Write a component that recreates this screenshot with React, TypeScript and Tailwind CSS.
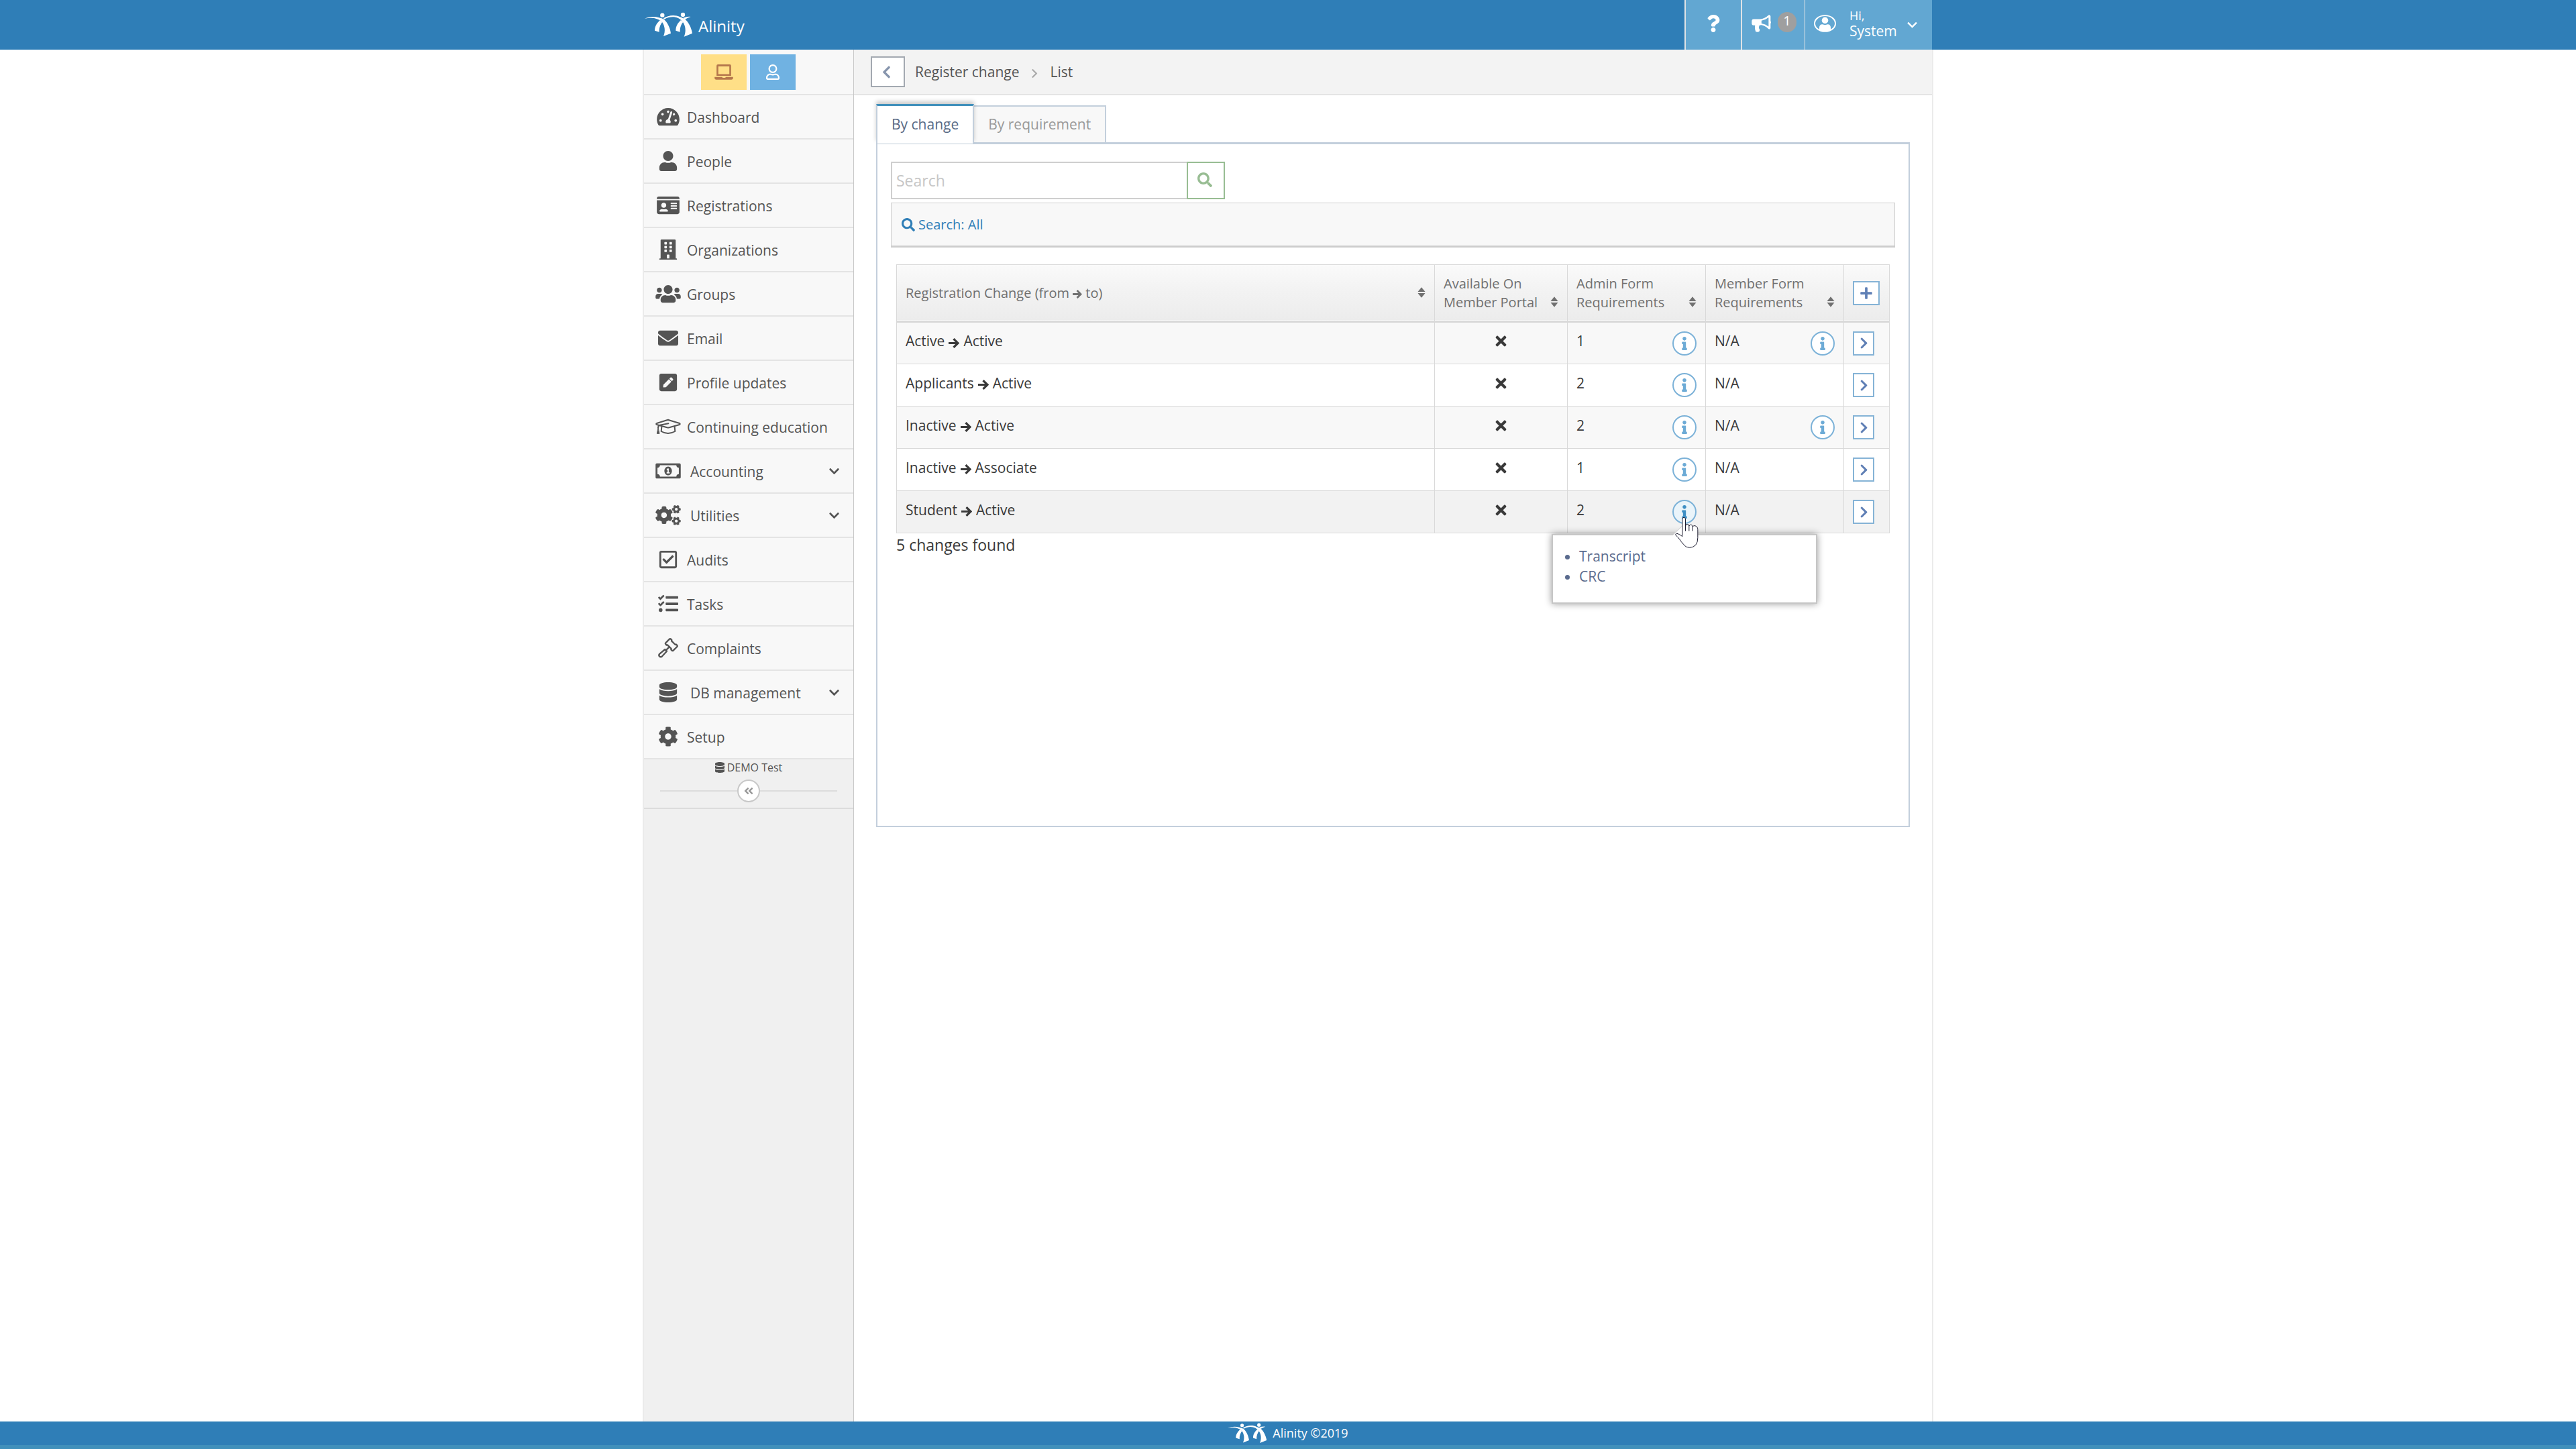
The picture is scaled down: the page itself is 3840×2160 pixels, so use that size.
import React from "react";
import {
  FaAngleDoubleLeft,
  FaBuilding,
  FaChevronDown,
  FaChevronLeft,
  FaChevronRight,
  FaCog,
  FaCogs,
  FaDatabase,
  FaEnvelope,
  FaIdCard,
  FaInfo,
  FaPenSquare,
  FaPlus,
  FaQuestion,
  FaRegCheckSquare,
  FaRegMoneyBillAlt,
  FaRegUser,
  FaSearch,
  FaTachometerAlt,
  FaTasks,
  FaTimes,
  FaUser,
  FaUsers,
} from "react-icons/fa";

type IconProps = { className?: string };

function Logo({ className }: IconProps) {
  return (
    <svg viewBox="0 0 216 110" className={className} fill="currentColor" aria-hidden="true">
      <circle cx="79" cy="12" r="9.5" />
      <circle cx="171" cy="10" r="9.5" />
      <path d="M0 27C22 17 46 17 64 23Q76 26 86 30C102 44 114 68 117 93L84 106C93 86 92 60 76 40C58 26 36 20 0 27Z" />
      <path d="M69 34C56 46 45 60 45 81L65 87C64 68 70 54 79 42Z" />
      <path d="M84 26C104 12 136 8 158 20Q170 24 179 28C195 42 209 66 213 93L176 108C185 88 185 60 169 40C152 20 122 12 88 30Z" />
      <path d="M162 34C149 46 139 60 139 81L158 87C157 68 163 54 172 42Z" />
      <path d="M172 24Q190 17 206 19Q192 24 180 31Z" />
    </svg>
  );
}

function CapIcon({ className }: IconProps) {
  return (
    <svg viewBox="0 0 114 90" className={className} fill="none" stroke="currentColor" strokeWidth="6" strokeLinejoin="round" strokeLinecap="round" aria-hidden="true">
      <path d="M58 15L108 30Q112 33 108 36L62 49Q57 50 52 49L6 36Q1 33 6 30L54 15Q57 14 60 15Z" />
      <path d="M28 46L26 66Q56 84 88 66L86 46" />
      <path d="M58 31L20 38Q12 41 12 50" />
      <path d="M12 52L7 76H17Z" fill="currentColor" strokeWidth="3" />
    </svg>
  );
}

function GavelIcon({ className }: IconProps) {
  return (
    <svg viewBox="0 0 90 90" className={className} fill="none" stroke="currentColor" strokeWidth="7" strokeLinejoin="round" strokeLinecap="round" aria-hidden="true">
      <path d="M51 5Q54 2 57 5L61 9L60 13L77 30L81 29L85 33Q88 36 85 39L68 56Q65 59 62 56L58 52L59 48L42 31L38 32L34 28Q31 25 34 22Z" />
      <path d="M50 40L35 55" />
      <path d="M31 51L39 59L18 82Q12 88 6 82Q1 77 7 71Z" />
    </svg>
  );
}

function LaptopIcon({ className }: IconProps) {
  return (
    <svg viewBox="0 0 84 70" className={className} fill="currentColor" aria-hidden="true">
      <path fillRule="evenodd" d="M15 0H69Q75 0 75 6V52H9V6Q9 0 15 0ZM17 9V44H67V9Z" />
      <path d="M0 57H34Q35 61 39 61H46Q50 61 51 57H84V61Q84 69 76 69H8Q0 69 0 61Z" />
    </svg>
  );
}

function BullhornIcon({ className }: IconProps) {
  return (
    <svg viewBox="0 0 88 78" className={className} fill="currentColor" aria-hidden="true">
      <path fillRule="evenodd" d="M10 19H38Q60 18 76 2Q84 -2 86 6V28Q90 33 86 40V60Q84 68 76 63Q62 49 44 46Q34 46 34 53Q31 60 37 66Q38 70 34 76Q26 79 19 76Q13 62 16 47H9Q1 47 1 38V28Q1 19 10 19ZM45 26V39Q62 41 77 53V12Q62 24 45 26Z" />
    </svg>
  );
}

function UserCircleIcon({ className }: IconProps) {
  return (
    <svg viewBox="0 0 100 78" className={className} fill="currentColor" aria-hidden="true">
      <ellipse cx="50" cy="39" rx="47" ry="36" fill="none" stroke="currentColor" strokeWidth="6" />
      <circle cx="50" cy="25" r="14.5" />
      <path d="M24 70V60Q24 43 38 43Q50 48 62 43Q76 43 76 60V70Q50 78 24 70Z" />
    </svg>
  );
}

function ChevronIcon({ className }: IconProps) {
  return (
    <svg viewBox="0 0 44 28" className={className} fill="none" stroke="currentColor" strokeWidth="7" aria-hidden="true">
      <path d="M3 4L22 23L41 4" />
    </svg>
  );
}

function ArrowIcon({ className }: IconProps) {
  return (
    <svg viewBox="0 0 30 28" className={className} fill="none" stroke="currentColor" strokeWidth="6" aria-hidden="true">
      <path d="M0 14H26M14 2L26 14L14 26" />
    </svg>
  );
}

function SortIcon({ className }: IconProps) {
  return (
    <svg viewBox="0 0 36 48" className={className} fill="currentColor" aria-hidden="true">
      <path d="M18 1L34 20Q35 21 34 21H2Q1 21 2 20ZM18 47L34 28Q35 27 34 27H2Q1 27 2 28Z" />
    </svg>
  );
}

function PointerIcon({ className }: IconProps) {
  return (
    <svg viewBox="0 0 104 138" className={className} fill="white" stroke="#1a1a2e" strokeWidth="3" strokeLinejoin="round" aria-hidden="true">
      <path d="M32 83V8Q32 1 39 1Q46 1 46 8V40Q47 30 54 31Q62 32 62 40Q65 33 71 34Q78 35 78 43Q81 37 87 38Q101 40 101 56V92Q101 134 64 136Q47 136 36 120Q27 110 20 99Q8 84 2 80Q1 70 12 74Q22 78 32 86Z" />
      <path d="M46 38V62M62 40V62M78 43V62" />
    </svg>
  );
}

const navItems: { label: string; icon: React.ComponentType<IconProps>; menu?: boolean }[] = [
  { label: "Dashboard", icon: FaTachometerAlt },
  { label: "People", icon: FaUser },
  { label: "Registrations", icon: FaIdCard },
  { label: "Organizations", icon: FaBuilding },
  { label: "Groups", icon: FaUsers },
  { label: "Email", icon: FaEnvelope },
  { label: "Profile updates", icon: FaPenSquare },
  { label: "Continuing education", icon: CapIcon },
  { label: "Accounting", icon: FaRegMoneyBillAlt, menu: true },
  { label: "Utilities", icon: FaCogs, menu: true },
  { label: "Audits", icon: FaRegCheckSquare },
  { label: "Tasks", icon: FaTasks },
  { label: "Complaints", icon: GavelIcon },
  { label: "DB management", icon: FaDatabase, menu: true },
  { label: "Setup", icon: FaCog },
];

const changes = [
  { from: "Active", to: "Active", admin: 1, member: "N/A", memberInfo: true },
  { from: "Applicants", to: "Active", admin: 2, member: "N/A", memberInfo: false },
  { from: "Inactive", to: "Active", admin: 2, member: "N/A", memberInfo: true },
  { from: "Inactive", to: "Associate", admin: 1, member: "N/A", memberInfo: false },
  { from: "Student", to: "Active", admin: 2, member: "N/A", memberInfo: false, open: true },
];

function Header() {
  return (
    <header className="bg-[#2f7eb7] text-white">
      <div className="mx-auto flex h-[74px] w-full max-w-[1920px] justify-between">
        <a href="#home" className="flex items-center gap-2 text-2xl">
          <Logo className="ml-px h-[38px] w-[72px]" />
          <span className="pt-1">Alinity</span>
        </a>
        <div className="flex bg-[#62a7d2]">
          <button type="button" aria-label="Help" className="flex w-[84px] items-center justify-center border-l-2 border-[#dfe3e6] pb-1">
            <FaQuestion className="h-[26px] w-[26px]" />
          </button>
          <button type="button" aria-label="Announcements" className="flex w-[95px] items-center gap-[10px] border-l-2 border-[#dfe3e6] pb-2 pl-[14px]">
            <BullhornIcon className="mt-1 h-[26px] w-[29px]" />
            <span className="flex h-[30px] w-[28px] items-center justify-center rounded-full bg-[#9f9f9f] pb-1 text-xl leading-none">1</span>
          </button>
          <button type="button" className="flex w-[190px] items-center border-l border-[#dfe3e6] pb-1 pl-[13px] text-left">
            <UserCircleIcon className="mr-5 h-[26px] w-[33px]" />
            <span className="flex w-[70px] flex-col text-[21px] leading-6">
              <span className="text-[18px] leading-[22px]">Hi,</span>
              <span>System</span>
            </span>
            <ChevronIcon className="mt-1 ml-4 h-[10px] w-[15px]" />
          </button>
        </div>
      </div>
    </header>
  );
}

function Sidebar() {
  return (
    <aside className="w-[313px] shrink-0 border-r border-[#c8c8c8] bg-[#f0f0f0] text-[#545454]">
      <div className="flex h-[68px] justify-center gap-[5px] border-b-2 border-[#e4e4e4] bg-[#f8f8f8] pt-[7px] pr-[2px]">
        <button type="button" aria-label="Administrator view" className="flex h-[53px] w-[68px] items-center justify-center bg-[#ffdf87] text-[#b5774c]">
          <LaptopIcon className="h-[23px] w-[28px]" />
        </button>
        <button type="button" aria-label="Member view" className="flex h-[53px] w-[68px] items-center justify-center bg-[#70b2e2] text-white">
          <FaRegUser className="h-[23px] w-[20px]" />
        </button>
      </div>
      <nav>
        <ul>
          {navItems.map(({ label, icon: Icon, menu }) => (
            <li key={label} className="border-b-2 border-[#e4e4e4] bg-[#f8f8f8]">
              <a href={"#" + label.toLowerCase().replace(" ", "-")} className="flex h-16 items-center pr-[21px] pl-[17px] text-[21px]">
                <Icon className="h-[30px] w-[38px] shrink-0" />
                <span className={menu ? "ml-[14px] grow pt-[3px]" : "ml-[9px] grow pt-[3px] whitespace-nowrap"}>{label}</span>
                {menu && <FaChevronDown className="h-[17px] w-[15px]" />}
              </a>
            </li>
          ))}
        </ul>
      </nav>
      <div className="flex flex-col items-center border-b-2 border-[#dcdcdc] px-6 pb-2 text-base">
        <p className="flex items-center gap-1">
          <FaDatabase className="h-4 w-[14px]" />
          DEMO Test
        </p>
        <div className="mt-[6px] flex w-full items-center">
          <span className="h-[2px] grow bg-[#dcdcdc]" />
          <button type="button" aria-label="Collapse menu" className="flex h-[34px] w-[34px] items-center justify-center rounded-full border-2 border-[#c8c8c8] bg-white text-[#999]">
            <FaAngleDoubleLeft className="h-[16px] w-[16px]" />
          </button>
          <span className="h-[2px] grow bg-[#dcdcdc]" />
        </div>
      </div>
    </aside>
  );
}

function InfoButton({ label, open }: { label: string; open?: boolean }) {
  return (
    <span className="relative ml-auto flex">
      <button
        type="button"
        aria-label={label}
        className={
          open
            ? "flex h-9 w-9 items-center justify-center rounded-full border-2 border-[#7cb2d8] bg-[#eaf4fa] text-[#3f8fc4]"
            : "flex h-9 w-9 items-center justify-center rounded-full border-2 border-[#7cb2d8] bg-white text-[#6dabd6]"
        }
      >
        <FaInfo className="h-5 w-5" />
      </button>
      {open && (
        <>
          <div role="tooltip" className="absolute top-[51px] -right-[180px] z-10 w-[396px] border-2 border-[#c6c6c6] bg-white pt-4 pb-6 pl-[39px] text-[21px] leading-[30px] text-[#5a6b8e] shadow-[0_0_10px_rgba(0,0,0,0.4)]">
            <ul className="list-disc">
              <li>Transcript</li>
              <li>CRC</li>
            </ul>
          </div>
          <svg viewBox="0 0 36 18" className="absolute top-[35px] left-0 z-10 h-[18px] w-9 fill-white stroke-[#c6c6c6]" aria-hidden="true">
            <path d="M0 18L18 1L36 18" />
          </svg>
          <PointerIcon className="absolute top-[26px] left-1 z-20 h-[46px] w-[35px]" />
        </>
      )}
    </span>
  );
}

function SortHeader({ children }: { children: React.ReactNode }) {
  return (
    <span className="flex items-end justify-between pr-[13px]">
      <span className="leading-7">{children}</span>
      <button type="button" aria-label="Sort" className="mb-[7px]">
        <SortIcon className="h-4 w-3" />
      </button>
    </span>
  );
}

function ChangesTable() {
  const head = "border-r border-[#d9d9d9] pl-[13px] font-normal";
  const cell = "border-r border-[#d9d9d9] pl-[13px]";
  return (
    <table className="w-full table-fixed border-collapse border border-[#d9d9d9] text-left">
      <colgroup>
        <col />
        <col className="w-[198px]" />
        <col className="w-[206px]" />
        <col className="w-[206px]" />
        <col className="w-[68px]" />
      </colgroup>
      <thead className="text-xl text-[#707070]">
        <tr className="h-[85px] border-b-3 border-[#d9d9d9] bg-linear-to-b from-[#fafafa] via-[#f2f2f2] to-[#ececec]">
          <th scope="col" className={head}>
            <SortHeader>
              Registration Change (from <ArrowIcon className="inline h-[13px] w-[14px]" /> to)
            </SortHeader>
          </th>
          <th scope="col" className={head}>
            <SortHeader>
              Available On
              <br />
              Member Portal
            </SortHeader>
          </th>
          <th scope="col" className={head}>
            <SortHeader>
              Admin Form
              <br />
              Requirements
            </SortHeader>
          </th>
          <th scope="col" className={head}>
            <SortHeader>
              Member Form
              <br />
              Requirements
            </SortHeader>
          </th>
          <th scope="col" className={head}>
            <button type="button" aria-label="Add change" className="flex h-9 w-10 items-center justify-center border-2 border-[#85b3d6] bg-white text-[#5f7fb5]">
              <FaPlus className="h-[20px] w-[20px]" />
            </button>
          </th>
        </tr>
      </thead>
      <tbody className="text-[21px] text-[#393939]">
        {changes.map((row, i) => (
          <tr
            key={i}
            className={
              row.open
                ? "h-[63px] border-b border-[#d9d9d9] bg-[#f2f2f2]"
                : "h-[63px] border-b border-[#d9d9d9] odd:bg-[#f8f8f8] even:bg-white"
            }
          >
            <td className={cell}>
              <span className="flex items-center gap-[6px] pb-[5px]">
                {row.from}
                <ArrowIcon className="mt-1 h-[15px] w-[16px]" />
                {row.to}
              </span>
            </td>
            <td className="border-r border-[#d9d9d9]">
              <FaTimes className="mx-auto mb-[6px] h-[23px] w-[23px]" role="img" aria-label="No" />
            </td>
            <td className={cell}>
              <span className="flex items-center pr-[13px]">
                <span className="pb-[5px]">{row.admin}</span>
                <InfoButton label="Admin form requirements" open={row.open} />
              </span>
            </td>
            <td className={cell}>
              <span className="flex items-center pr-[13px]">
                <span className="pb-[5px]">{row.member}</span>
                {row.memberInfo && <InfoButton label="Member form requirements" />}
              </span>
            </td>
            <td className={cell}>
              <button type="button" aria-label="Open change" className="flex h-9 w-8 items-center justify-center border-2 border-[#85b3d6] bg-white text-[#5f7fb5]">
                <FaChevronRight className="h-[19px] w-[19px]" />
              </button>
            </td>
          </tr>
        ))}
      </tbody>
    </table>
  );
}

export default function App() {
  return (
    <div className="flex min-h-screen flex-col bg-white font-['Open_Sans',sans-serif]">
      <Header />
      <div className="mx-auto flex w-full max-w-[1924px] grow border-x-2 border-[#ebebeb]">
        <Sidebar />
        <main className="min-w-0 grow">
          <div className="flex h-[68px] items-center border-b-2 border-[#e4e4e4] bg-[#f3f3f3] pl-[25px] text-[21px] text-[#555]">
            <button type="button" aria-label="Back" className="mr-[15px] flex h-[46px] w-[51px] items-center justify-center border-2 border-[#a3a9b1] bg-white pr-1 text-[#8795ad]">
              <FaChevronLeft className="h-[21px] w-[21px]" />
            </button>
            <a href="#register-change" className="pt-[2px]">Register change</a>
            <ChevronIcon className="mx-4 mt-1 h-[9px] w-[14px] -rotate-90 text-[#aaa]" />
            <span className="pt-[2px]">List</span>
          </div>
          <div className="px-[33px] pt-[13px]">
            <div role="tablist" className="flex items-end text-[21px]">
              <button type="button" role="tab" aria-selected="true" className="relative z-10 -mb-[2px] h-[59px] border-x-2 border-t-3 border-x-[#c3cfdc] border-t-[#4190bb] bg-white px-[21px] text-[#576a85] shadow-[0_-4px_6px_rgba(0,0,0,0.2)]">
                By change
              </button>
              <button type="button" role="tab" aria-selected="false" className="h-[55px] border-t-2 border-r-2 border-[#c3cfdc] bg-[#f8f8f8] px-[21px] text-[#999]">
                By requirement
              </button>
            </div>
            <section className="min-h-[1021px] border-2 border-t-3 border-[#c3cfdc] bg-white px-5 pt-[26px]">
              <form className="flex text-[23px]">
                <input aria-label="Search" placeholder="Search" className="h-[56px] w-[441px] border-2 border-r-0 border-[#cfcfcf] bg-white px-[6px] pb-px placeholder:text-[#c6c6c6]" />
                <button type="button" aria-label="Search" className="flex h-[56px] w-[57px] items-center justify-center border-2 border-[#98bd93] pr-[3px] pb-[2px] text-[#98bd93]">
                  <FaSearch className="h-[22px] w-[22px]" />
                </button>
              </form>
              <div className="mt-[5px] flex h-[67px] items-center border border-b-3 border-[#cdcdcd] bg-[#f8f8f8] pl-[15px] text-xl text-[#2f7eb7]">
                <a href="#search" className="flex items-center gap-[5px]">
                  <FaSearch className="h-5 w-5" />
                  Search: All
                </a>
              </div>
              <div className="mt-[25px] px-2">
                <ChangesTable />
                <p className="text-[23px] text-[#393939]">5 changes found</p>
              </div>
            </section>
          </div>
        </main>
      </div>
      <footer className="flex h-[41px] items-center justify-center gap-2 border-b-6 border-[#4190bb] bg-[#2f7eb7] text-[18px] text-white">
        <Logo className="h-[31px] w-[59px]" />
        Alinity ©2019
      </footer>
    </div>
  );
}
